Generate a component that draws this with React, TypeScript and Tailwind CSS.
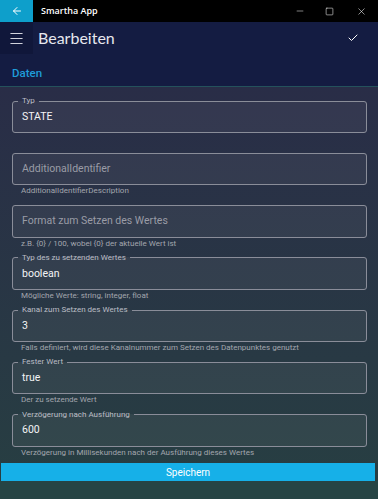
import { Check, Menu, ArrowLeft, Minus, Square, X } from "lucide-react";

const fields = [
  { label: "Typ", value: "STATE" },
  { placeholder: "AdditionalIdentifier", help: "AdditionalIdentifierDescription" },
  { placeholder: "Format zum Setzen des Wertes", help: "z.B. {0} / 100, wobei {0} der aktuelle Wert ist" },
  { label: "Typ des zu setzenden Wertes", value: "boolean", help: "Mögliche Werte: string, integer, float" },
  { label: "Kanal zum Setzen des Wertes", value: "3", help: "Falls definiert, wird diese Kanalnummer zum Setzen des Datenpunktes genutzt" },
  { label: "Fester Wert", value: "true", help: "Der zu setzende Wert" },
  { label: "Verzögerung nach Ausführung", value: "600", help: "Verzögerung in Millisekunden nach der Ausführung dieses Wertes" },
];

export default function App() {
  return (
    <div
      className="w-[378px] h-[499px] flex flex-col overflow-hidden bg-black"
      style={{ fontFamily: "Roboto, 'Noto Sans', sans-serif" }}
    >
      {/* Title bar */}
      <div className="h-[22px] flex items-center bg-black text-white shrink-0">
        <div className="w-[33px] h-full bg-[#0e9fcb] flex items-center justify-center">
          <ArrowLeft size={12} strokeWidth={2} />
        </div>
        <span
          className="ml-[8px] text-[9px] font-semibold"
          style={{ fontFamily: "'Open Sans', 'Noto Sans', sans-serif" }}
        >
          Smartha App
        </span>
        <div className="ml-auto flex items-center h-full text-white">
          <div className="w-[29px] flex justify-center">
            <Minus size={10} strokeWidth={1.2} />
          </div>
          <div className="w-[31px] flex justify-center">
            <Square size={9} strokeWidth={1.4} />
          </div>
          <div className="w-[33px] flex justify-center">
            <X size={11} strokeWidth={1.2} />
          </div>
        </div>
      </div>

      {/* Header */}
      <div className="bg-[#141c42] shrink-0">
        <div className="h-[32px] flex items-center">
          <div className="w-[33px] h-full bg-[#10173a] flex items-center justify-center text-[#d0d2dc]">
            <Menu size={17} strokeWidth={1.5} />
          </div>
          <span
            className="ml-[5px] text-[16px] text-[#e6e7ee]"
            style={{ fontFamily: "Lato, 'Noto Sans', sans-serif" }}
          >
            Bearbeiten
          </span>
          <div className="ml-auto mr-[19px] text-white">
            <Check size={12} strokeWidth={2} />
          </div>
        </div>
        <div className="h-[33px] flex items-center pt-[8px] px-[12px] border-b border-[#24525c]">
          <span className="text-[11.5px] font-medium text-[#1f9dd9]">Daten</span>
        </div>
      </div>

      {/* Content */}
      <div className="flex-1 min-h-0 flex flex-col bg-gradient-to-b from-[#292d47] to-[#273f42]">
        <div className="flex-1 min-h-0 flex flex-col pt-[9px] pl-[12px] pr-[11px]">
          {fields.map((f, i) => (
            <div key={i} className="h-[52.3px] shrink-0 flex flex-col">
              <fieldset className="border border-[#8a8d99] rounded-[3px] bg-white/[0.05] px-[9px] pb-[5px]">
                <legend
                  className={`h-[10px] text-[8px] leading-[10px] text-[#bcbec6] ${
                    f.label ? "px-[4px] -ml-[4px]" : ""
                  }`}
                >
                  {f.label ?? ""}
                </legend>
                <div
                  className={`h-[21px] flex items-center text-[10.5px] ${
                    f.value ? "text-[#f4f4f6]" : "text-[#9a9ca6]"
                  }`}
                >
                  {f.value ?? f.placeholder}
                </div>
              </fieldset>
              {f.help && (
                <p className="ml-[9px] mt-[1px] text-[8px] leading-[10px] text-[#a3a6ae]">{f.help}</p>
              )}
            </div>
          ))}
        </div>
        <button className="h-[18px] shrink-0 ml-[1px] mr-[3px] bg-[#16b0e8] text-white text-[10px] flex items-center justify-center">
          Speichern
        </button>
        <div className="h-[18px] shrink-0 bg-[#264444]" />
      </div>
    </div>
  );
}
